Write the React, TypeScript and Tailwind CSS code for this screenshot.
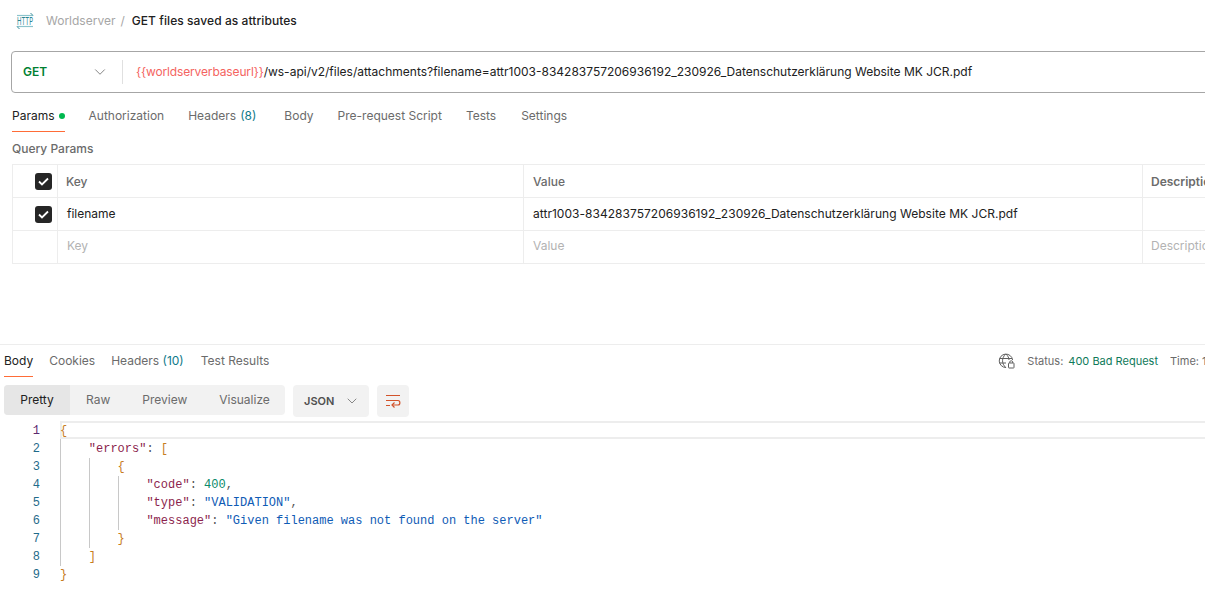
import { ChevronDown } from "lucide-react";

const requestTabs = [
  { label: "Authorization", gap: "ml-[24px]" },
  { label: "Headers", count: "(8)", gap: "ml-6" },
  { label: "Body", gap: "ml-7" },
  { label: "Pre-request Script", gap: "ml-6" },
  { label: "Tests", gap: "ml-[24px]" },
  { label: "Settings", gap: "ml-[25px]" },
];

const fileName = "attr1003-834283757206936192_230926_Datenschutzerklärung Website MK JCR.pdf";

function HttpIcon() {
  return (
    <svg width="18" height="18" viewBox="0 0 18 18" fill="none" className="shrink-0 overflow-visible">
      <path d="M1 3.500H17" stroke="#8cc4cc" strokeWidth="1.200" />
      <path d="M14.500 1L17 3.500" stroke="#3a8f9c" strokeWidth="1" />
      <path d="M1 14.500H17" stroke="#8cc4cc" strokeWidth="1.200" />
      <path d="M3.500 17L1 14.500" stroke="#3a8f9c" strokeWidth="1" />
      <text
        x="1"
        y="13"
        fontSize="11"
        textLength="16"
        lengthAdjust="spacingAndGlyphs"
        fontFamily="Inter, sans-serif"
        fill="#2a8593"
      >
        HTTP
      </text>
    </svg>
  );
}

function Check() {
  return (
    <div className="flex h-[17px] w-[17px] items-center justify-center rounded-[3px] bg-[#262626]">
      <svg width="11" height="9" viewBox="0 0 11 9" fill="none">
        <path d="M1 4.500L4 7.500L10 1.500" stroke="white" strokeWidth="1.800" />
      </svg>
    </div>
  );
}

function ParamRow({
  first,
  second,
  third,
  box,
  className,
}: {
  first: React.ReactNode;
  second: React.ReactNode;
  third?: React.ReactNode;
  box?: boolean;
  className?: string;
}) {
  return (
    <div className={"grid h-[33px] grid-cols-[45px_466px_619px_1fr] items-stretch " + (className ?? "")}>
      <div className="flex items-center justify-end border-r border-[#ededed] pr-[5px]">{box && <Check />}</div>
      <div className="flex items-center border-r border-[#ededed] pl-[8px]">{first}</div>
      <div className="flex items-center border-r border-[#ededed] pl-[9px]">{second}</div>
      <div className="flex items-center overflow-hidden whitespace-nowrap pl-[8px]">{third}</div>
    </div>
  );
}

function WrapIcon() {
  return (
    <svg width="16" height="14" viewBox="0 0 16 14" fill="none">
      <path d="M1 1.500H15M1 6.500H13C15.500 6.500 15.500 11 13 11H7.500M1 11.500H5" stroke="#d2532b" strokeWidth="1.200" />
      <path d="M9.500 8.500L7 11L9.500 13.500" stroke="#d2532b" strokeWidth="1.200" />
    </svg>
  );
}

function GlobeLock() {
  return (
    <svg width="17" height="16" viewBox="0 0 17 16" fill="none" stroke="#5f5f5f" strokeWidth="1">
      <path d="M8 14.500A6.700 6.700 0 1 1 14.600 7M1.500 5.500H14M1.500 10H8M7.700 1C3.500 5 3.500 10.500 7.700 14.500M8 1C10 3 11 5 11 7" />
      <rect x="10.500" y="10" width="5.500" height="5" rx="0.500" />
      <path d="M11.800 10V8.800C11.800 7.400 14.700 7.400 14.700 8.800V10" />
    </svg>
  );
}

const str = "text-[#0f5bb5]";
const key = "text-[#8c1f4d]";
const punct = "text-[#555555]";
const bracket = "text-[#c77d1e]";

const codeLines: React.ReactNode[] = [
  <span className={bracket}>{"{"}</span>,
  <>
    {"    "}
    <span className={key}>"errors"</span>
    <span className={punct}>: </span>
    <span className={bracket}>[</span>
  </>,
  <>
    {"        "}
    <span className={bracket}>{"{"}</span>
  </>,
  <>
    {"            "}
    <span className={key}>"code"</span>
    <span className={punct}>: </span>
    <span className="text-[#0b8a6a]">400</span>
    <span className={punct}>,</span>
  </>,
  <>
    {"            "}
    <span className={key}>"type"</span>
    <span className={punct}>: </span>
    <span className={str}>"VALIDATION"</span>
    <span className={punct}>,</span>
  </>,
  <>
    {"            "}
    <span className={key}>"message"</span>
    <span className={punct}>: </span>
    <span className={str}>"Given filename was not found on the server"</span>
  </>,
  <>
    {"        "}
    <span className={bracket}>{"}"}</span>
  </>,
  <>
    {"    "}
    <span className={bracket}>]</span>
  </>,
  <span className={bracket}>{"}"}</span>,
];

export default function App() {
  return (
    <div className="h-[598px] w-[1205px] overflow-hidden bg-white font-['Inter',sans-serif] text-xs text-[#6b6b6b]">
      <div className="flex h-[40px] items-center pl-[16px] pt-px">
        <HttpIcon />
        <span className="ml-[12px] text-[#a6a6a6]">Worldserver</span>
        <span className="ml-[5px] text-[#a6a6a6]">/</span>
        <span className="ml-[7px] font-medium tracking-[0.07px] text-[#212121]">GET files saved as attributes</span>
      </div>

      <div className="ml-[11px] mt-[11px] flex h-[42px] w-[1240px] items-center rounded-[4px] border border-[#a6a6a6]">
        <span className="ml-[11px] w-[68px] font-semibold text-[#007f31]">GET</span>
        <ChevronDown size={18} strokeWidth={1.1} className="text-[#6b6b6b]" />
        <div className="ml-[13px] h-[24px] w-px bg-[#e0e0e0]" />
        <div className="ml-[13px] whitespace-nowrap text-[#212121]">
          <span className="tracking-[-0.14px] text-[#f4645f]">{"{{worldserverbaseurl}}"}</span>
          /ws-api/v2/files/attachments?filename={fileName}
        </div>
      </div>

      <div className="ml-[12px] mt-[8px] flex h-[31px] items-start">
        <div className="relative flex h-full items-start pt-[7px] text-[#212121]">
          Params
          <span className="ml-[4px] mt-[5px] h-[6px] w-[6px] rounded-full bg-[#00b84f]" />
          <span className="absolute bottom-0 left-0 h-px w-full bg-[#ff6c37]" />
        </div>
        {requestTabs.map((tab) => (
          <span key={tab.label} className={"pt-[7px] " + tab.gap}>
            {tab.label}
            {tab.count && <span className="ml-[4px] text-[#0f7a8a]">{tab.count}</span>}
          </span>
        ))}
      </div>

      <div className="ml-[12px] mt-[9px] font-medium text-[#6b6b6b]">Query Params</div>

      <div className="ml-[12px] mt-[7px] border-l border-t border-[#ededed]">
        <ParamRow
          box
          className="border-b border-[#ededed]"
          first={<span className="mt-[2px] font-medium">Key</span>}
          second={<span className="mt-[2px] font-medium">Value</span>}
          third={<span className="mt-[2px] font-semibold">Description</span>}
        />
        <ParamRow
          box
          className="border-b border-[#ededed]"
          first={<span className="ml-px text-[#212121]">filename</span>}
          second={<span className="tracking-[0.03px] text-[#212121]">{fileName}</span>}
        />
        <ParamRow
          className="border-b border-[#ededed]"
          first={<span className="mb-[2px] ml-px text-[#b3b3b3]">Key</span>}
          second={<span className="mb-[2px] text-[#b3b3b3]">Value</span>}
          third={<span className="mb-[2px] text-[#b3b3b3]">Description</span>}
        />
      </div>

      <div className="mt-[80px] border-t border-[#ededed]">
        <div className="flex h-[32px] items-center pl-[4px]">
          <div className="relative flex h-full items-center text-[#212121]">
            Body
            <span className="absolute bottom-0 left-0 h-px w-full bg-[#ff6c37]" />
          </div>
          <span className="ml-[16px]">Cookies</span>
          <span className="ml-[16px]">
            Headers <span className="text-[#0f7a8a]">(10)</span>
          </span>
          <span className="ml-[17px]">Test Results</span>
          <div className="ml-auto flex items-center text-[11px]">
            <GlobeLock />
            <span className="ml-[12px]">Status:</span>
            <span className="ml-[5px] text-[#0f7a5a]">400 Bad Request</span>
            <span className="ml-[12px] w-[35px] overflow-hidden whitespace-nowrap">Time: 1</span>
          </div>
        </div>

        <div className="ml-[4px] mt-[8px] flex items-start">
          <div className="flex h-[30px] w-[281px] items-center rounded-[4px] bg-[#f2f2f2]">
            <div className="flex h-full w-[66px] items-center justify-center rounded-l-[4px] bg-[#e6e6e6] text-[#212121]">
              Pretty
            </div>
            <span className="ml-[16px]">Raw</span>
            <span className="ml-[32px]">Preview</span>
            <span className="ml-[32px]">Visualize</span>
          </div>
          <div className="ml-[8px] flex h-[32px] w-[76px] items-center rounded-[4px] bg-[#f2f2f2] pl-[11px] text-[11px] font-semibold text-[#505050]">
            JSON
            <ChevronDown size={16} strokeWidth={1.2} className="ml-[10px] text-[#6b6b6b]" />
          </div>
          <div className="ml-[8px] flex h-[32px] w-[32px] items-center justify-center rounded-[4px] bg-[#f2f2f2]">
            <WrapIcon />
          </div>
        </div>

        <div className="mt-[5px] flex font-['Liberation_Mono',monospace] text-xs leading-[18px]">
          <div className="w-[40px] shrink-0 text-right text-[#1f6b8a]">
            {codeLines.map((_, i) => (
              <div key={i} className={i === 0 ? "text-[#5b2a6e]" : ""}>
                {i + 1}
              </div>
            ))}
          </div>
          <div className="relative ml-[20px] grow">
            {/* indent guides sit over the code column */}
            <div className="absolute left-0 top-[17px] h-[127px] w-px bg-[#c8c8c8]" />
            <div className="absolute left-[29px] top-[36px] h-[90px] w-px bg-[#c8c8c8]" />
            <div className="absolute left-[58px] top-[54px] h-[54px] w-px bg-[#c8c8c8]" />
            <div className="absolute -top-px left-0 h-[18px] w-full border-y-2 border-l-2 border-[#ededed]" />
            {codeLines.map((line, i) => (
              <div key={i} className="relative h-[18px] whitespace-pre">
                {line}
              </div>
            ))}
          </div>
        </div>
      </div>
    </div>
  );
}
